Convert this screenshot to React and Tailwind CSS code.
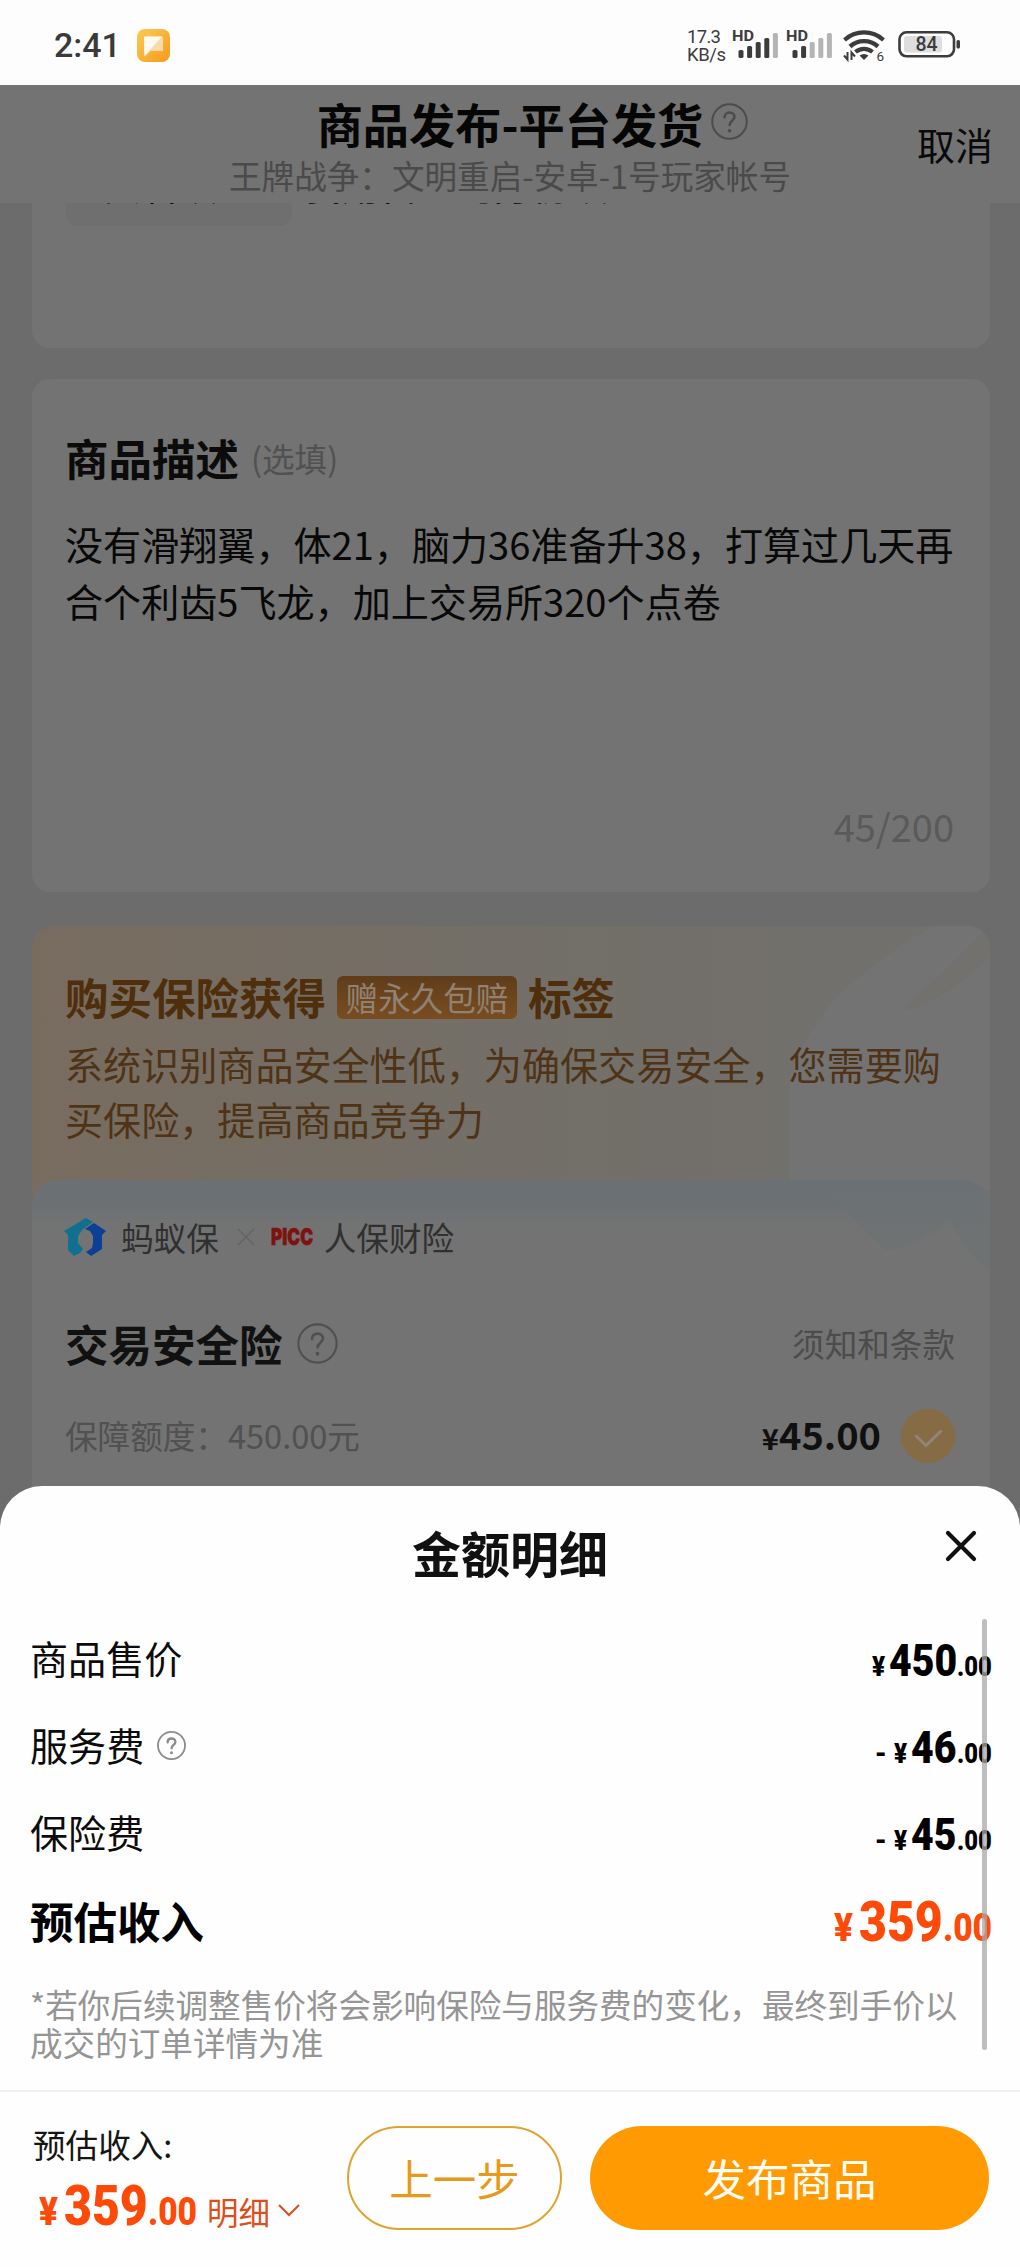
import React from "react";

function Help({ size, color, className = "", stroke = 1.3 }) {
  return (
    <svg width={size} height={size} viewBox="0 0 24 24" fill="none" stroke={color} strokeWidth={stroke} strokeLinecap="round" className={className}>
      <circle cx="12" cy="12" r="11.2" />
      <path d="M8.800 9.300c0-1.900 1.400-3.100 3.200-3.100s3.200 1.200 3.200 2.900c0 2.300-3.100 2.600-3.100 5.100" strokeWidth={stroke * 1.3} />
      <circle cx="12" cy="18" r="0.500" fill={color} />
    </svg>
  );
}

function Bars({ x, on }) {
  return [8, 12, 16, 20, 25].map((h, i) => (
    <rect key={i} x={x + i * 8.6} y={58 - h} width="5" height={h} rx="1.600" fill={i < on ? "#3c3c3c" : "#b4b4b4"} />
  ));
}

function StatusBar() {
  return (
    <div className="flex h-[85px] shrink-0 items-start justify-between bg-[#fdfdfd] font-['Roboto',sans-serif] text-[#3a3a3a]">
      <div className="flex h-[90px] items-center pl-[54px]">
        <span className="w-[83px] text-[34px] font-medium leading-[40px]">2:41</span>
        <svg width="33" height="33" viewBox="0 0 33 33">
          <defs>
            <linearGradient id="app" x1="0" y1="0" x2="1" y2="1">
              <stop offset="0" stopColor="#f9cb55" />
              <stop offset="1" stopColor="#f79a1c" />
            </linearGradient>
          </defs>
          <rect width="33" height="33" rx="8" fill="url(#app)" />
          <path d="M7 8.500q0-1 1-1h17q1 0 1 1v13.500h-12.500l-5 5q-1.500 1-1.500-.5z" fill="#fbd9a8" />
          <path d="M7 8.500q0-1 1-1h17L7.500 27z" fill="#fffaf0" />
        </svg>
      </div>
      <svg width="340" height="85" viewBox="680 0 340 85">
        <g fill="#3c3c3c" fontFamily="Roboto, sans-serif">
          <text x="687" y="43" fontSize="18.500" textLength="34">17.3</text>
          <text x="687" y="60.500" fontSize="18.500" textLength="39">KB/s</text>
          <text x="732" y="40.500" fontSize="14.500" fontWeight="700" textLength="22" lengthAdjust="spacingAndGlyphs">HD</text>
          <text x="786" y="40.500" fontSize="14.500" fontWeight="700" textLength="22" lengthAdjust="spacingAndGlyphs">HD</text>
        </g>
        <Bars x={738.5} on={4} />
        <Bars x={792.5} on={2} />
        <g fill="none" stroke="#3c3c3c" strokeWidth="4.200">
          <path d="M844.500 40a29 29 0 0 1 39 0" />
          <path d="M850 46.500a21 21 0 0 1 28 0" strokeWidth="4.400" />
          <path d="M855.500 52a13 13 0 0 1 17 0" strokeWidth="4.200" />
        </g>
        <path d="M859.500 55.500q4.500-3 9 0l-4.500 4.500z" fill="#3c3c3c" />
        <path d="M847.500 52v7.500l-3.500-4M851.500 60v-7.500l3.500 4" fill="none" stroke="#3c3c3c" strokeWidth="2" />
        <text x="876.500" y="60.500" fontSize="13.500" fill="#3c3c3c" fontFamily="Roboto, sans-serif">6</text>
        <rect x="899.500" y="32.300" width="54.500" height="24" rx="7" fill="none" stroke="#3c3c3c" strokeWidth="2.600" />
        <rect x="904" y="36" width="38" height="16.500" rx="3" fill="#dedede" />
        <rect x="956.500" y="40" width="3.500" height="8.500" rx="1.500" fill="#3c3c3c" />
        <text x="926.500" y="51" fontSize="19.500" fontWeight="500" textAnchor="middle" fill="#3c3c3c" fontFamily="Roboto, sans-serif">84</text>
      </svg>
    </div>
  );
}

function Header() {
  return (
    <div className="grid h-[118px] shrink-0 grid-cols-[1fr_auto_1fr] bg-[#737373]">
      <div />
      <div className="flex flex-col items-center whitespace-nowrap">
        <div className="relative text-[46.200px] font-bold leading-[75px] text-[#060606]">
          商品发布-平台发货
          <Help size={37} color="#4c4c4c" className="absolute left-full top-[18px] ml-[8px]" />
        </div>
        <div className="text-[32.600px] leading-[30px] text-[#4a4a4a]">王牌战争：文明重启-安卓-1号玩家帐号</div>
      </div>
      <div className="flex items-center justify-end pb-[2px] pr-[27px] text-[38px] text-[#0a0a0a]">取消</div>
    </div>
  );
}

function Description() {
  return (
    <section className="mt-[31px] flex h-[513px] flex-col rounded-[18px] bg-[#737373] pb-[47px] pl-[33px] pr-[36px] pt-[49px]">
      <div className="flex h-[60px] items-center">
        <h2 className="text-[43.500px] font-bold text-[#0b0b0b]">商品描述</h2>
        <span className="ml-[12px] text-[32.600px] text-[#515151]">(选填)</span>
      </div>
      <p className="mt-[27px] whitespace-nowrap text-[38.080px] leading-[57px] text-[#080808]">
        没有滑翔翼，体21，脑力36准备升38，打算过几天再
        <br />
        合个利齿5飞龙，加上交易所320个点卷
      </p>
      <div className="mt-auto text-right text-[38px] leading-[38px] text-[#5a5a5a]">45/200</div>
    </section>
  );
}

function Promo() {
  return (
    <section className="relative mt-[34px] h-[293px] overflow-hidden rounded-t-[22px] bg-linear-to-r from-[#786c5f] via-[#736f68] to-[#72716f] px-[33px] pt-[41px]">
      <svg className="absolute right-0 top-0" width="200" height="290" viewBox="0 0 200 290">
        <path d="M0 290V150Q20 90 70 50T145 0H200V290z" fill="#737373" />
        <path d="M200 0Q150 50 110 85Q150 80 200 30z" fill="#72716e" />
      </svg>
      <div className="relative flex h-[60px] items-center whitespace-nowrap text-[43.500px] font-bold text-[#4f2f0b]">
        购买保险获得
        <span className="mx-[11px] mt-[1px] flex h-[43px] w-[180px] items-center justify-center rounded-[6px] bg-linear-to-b from-[#5f3d1a] to-[#7a4d20] text-[32.600px] font-normal text-[#8f8273]">赠永久包赔</span>
        标签
      </div>
      <p className="relative mt-[9px] whitespace-nowrap text-[38.080px] leading-[55px] text-[#4f3316]">
        系统识别商品安全性低，为确保交易安全，您需要购
        <br />
        买保险，提高商品竞争力
      </p>
    </section>
  );
}

function Insurance() {
  return (
    <section className="relative -mt-[39px] h-[346px] rounded-t-[26px] bg-linear-to-b from-[#6a7074] via-[#6e7173] via-[30px] to-[#737373] to-[46px] pl-[33px] pr-[35px] pt-[37px]">
      <svg className="absolute right-0 top-0" width="190" height="90" viewBox="0 0 190 90">
        <path d="M30 10H190V90Q165 75 150 40Q110 70 85 70Q50 40 30 10z" fill="#6c7173" opacity="0.600" />
      </svg>
      <div className="relative flex h-[40px] items-center whitespace-nowrap text-[32.600px] text-[#303030]">
        <svg width="42" height="39" viewBox="0 0 42 39" className="-ml-px">
          <path d="M22 0L29 4 18 12 14 18 14 25 19 31 16 35 10 38 4 32 4 17 0 13z" fill="#12708f" />
          <path d="M30 5L42 13 38 17 38 31 27 38 22 34 28 30 29 25 29 18 26 13 21 11z" fill="#0d3f94" />
        </svg>
        <span className="ml-[15px]">蚂蚁保</span>
        <svg width="18" height="18" viewBox="0 0 18 18" className="ml-[18px]" stroke="#646464" strokeWidth="1.500">
          <path d="M1 1l16 16M17 1L1 17" />
        </svg>
        <svg width="43" height="20" viewBox="0 0 43 20" className="ml-[16px]">
          <text x="0" y="18" textLength="42" lengthAdjust="spacingAndGlyphs" fontFamily="Inter, sans-serif" fontWeight="900" fontSize="23" fill="#7d1210" stroke="#7d1210" strokeWidth="0.600">PICC</text>
        </svg>
        <span className="ml-[10px]">人保财险</span>
      </div>
      <div className="mt-[57px] flex h-[60px] items-center">
        <h2 className="text-[43.500px] font-bold text-[#111]">交易安全险</h2>
        <Help size={41} color="#4f4f4f" className="-mt-[2px] ml-[14px]" stroke={1.2} />
        <span className="ml-auto pb-[2px] text-[32.600px] text-[#4c4c4c]">须知和条款</span>
      </div>
      <div className="mt-[35px] flex h-[54px] items-center">
        <span className="pb-[2px] text-[32.600px] text-[#515151]">保障额度：450.00元</span>
        <span className="ml-auto pb-[6px] text-[38px] font-bold text-[#101010]">
          <span className="text-[29px]">¥</span>45.00
        </span>
        <svg width="54" height="54" viewBox="0 0 54 54" className="ml-[20px]">
          <circle cx="27" cy="27" r="27" fill="#866c44" />
          <path d="M14.500 26.500l10.500 10 15.500-15" fill="none" stroke="#918577" strokeWidth="3" />
        </svg>
      </div>
    </section>
  );
}

function Amount({ whole, large, minus }) {
  if (large) {
    return (
      <div className="flex items-baseline whitespace-nowrap pt-[3px] font-['Roboto',sans-serif] font-black leading-none text-[#fd4a08]">
        <span className="w-[25px]"><span className="inline-block origin-left scale-x-[0.900] text-[39px]">¥</span></span>
        <span className="w-[84px]"><span className="inline-block origin-left scale-x-[0.860] text-[56px]">{whole}</span></span>
        <span className="w-[48px]"><span className="inline-block origin-left scale-x-[0.860] text-[39px]">.00</span></span>
      </div>
    );
  }
  return (
    <div className="flex items-baseline whitespace-nowrap pt-[4px] font-['Roboto',sans-serif] font-black leading-none text-black">
      {minus && <span className="mr-[7px] text-[27px]">-</span>}
      <span className="w-[17px]"><span className="inline-block origin-left scale-x-[0.900] text-[27px]">¥</span></span>
      <span className={minus ? "w-[46px]" : "w-[68px]"}><span className="inline-block origin-left scale-x-[0.870] text-[45px]">{whole}</span></span>
      <span className="w-[34px]"><span className="inline-block origin-left scale-x-[0.850] text-[28px]">.00</span></span>
    </div>
  );
}

function Row({ label, help, children }) {
  return (
    <div className="flex h-[87px] items-center justify-between text-[38.080px] text-[#0c0c0c]">
      <div className="flex items-center pb-[2px]">
        {label}
        {help && <Help size={29} color="#8c8c8c" className="ml-[13px] mt-[2px]" stroke={1.5} />}
      </div>
      {children}
    </div>
  );
}

function Sheet() {
  return (
    <div className="relative -mt-[40px] flex h-[781px] shrink-0 flex-col rounded-t-[42px] bg-[#fefefe]">
      <div className="relative flex h-[129px] items-center justify-center pt-[3px] text-[49px] font-bold text-[#111]">
        金额明细
        <svg width="32" height="32" viewBox="0 0 32 32" className="absolute right-[43px] top-[44px]" stroke="#111" strokeWidth="4.200" strokeLinecap="round">
          <path d="M3 3l26 26M29 3L3 29" />
        </svg>
      </div>
      <div className="relative h-[475px] pl-[30px] pr-[29px]">
        <Row label="商品售价"><Amount whole="450" /></Row>
        <Row label="服务费" help><Amount whole="46" minus /></Row>
        <Row label="保险费"><Amount whole="45" minus /></Row>
        <div className="flex h-[88px] items-center justify-between text-[43.500px] font-bold text-black">
          <span className="pt-[2px]">预估收入</span>
          <Amount whole="359" large />
        </div>
        <p className="mt-[21px] whitespace-nowrap text-[32.600px] leading-[37.500px] text-[#959595]">
          *若你后续调整售价将会影响保险与服务费的变化，最终到手价以
          <br />
          成交的订单详情为准
        </p>
        <div className="absolute right-[33px] top-[4px] h-[431px] w-[5px] rounded-full bg-[#a8a8a8]/75" />
      </div>
      <div className="flex flex-1 items-start border-t-2 border-[#f0f0f0] pr-[31px] pt-[34px] text-[43.500px]">
        <div className="w-[347px] pl-[33px]">
          <div className="text-[32.600px] leading-[36px] text-[#151515]">预估收入:</div>
          <div className="ml-[6px] mt-[13px] flex items-end text-[#fd4a08]">
            <Amount whole="359" large />
            <span className="mb-[4px] ml-[11px] text-[31.500px] leading-[38px] text-[#d9501c]">明细</span>
            <svg width="22" height="14" viewBox="0 0 22 14" className="mb-[17px] ml-[8px]" fill="none" stroke="#d9501c" strokeWidth="2">
              <path d="M1 2l10 10L21 2" />
            </svg>
          </div>
        </div>
        <button className="h-[104px] w-[215px] rounded-full border-2 border-[#dfa32f] text-[#e69a1c]">上一步</button>
        <button className="ml-[28px] h-[104px] flex-1 rounded-full bg-[#ff9a02] text-[#fffdf4]">发布商品</button>
      </div>
    </div>
  );
}

export default function App() {
  return (
    <div className="flex h-[2267px] w-[1020px] flex-col overflow-hidden bg-[#6c6c6c] font-['Noto_Sans_CJK_SC',sans-serif]">
      <StatusBar />
      <Header />
      <main className="h-[1323px] shrink-0 overflow-hidden pl-[32px] pr-[30px]">
        <section className="h-[145px] rounded-b-[18px] bg-[#737373] px-[34px]">
          <div className="flex h-[23px] items-start overflow-hidden whitespace-nowrap text-[38px] leading-[38px] text-[#080808]">
            <div className="flex h-[23px] w-[226px] justify-center rounded-b-[12px] bg-[#6f6f6f]">
              <span className="-mt-[38px]">实名认证</span>
            </div>
            <span className="-mt-[38px] ml-[12px]">我用自己的身份认证</span>
          </div>
        </section>
        <Description />
        <Promo />
        <Insurance />
      </main>
      <Sheet />
    </div>
  );
}
